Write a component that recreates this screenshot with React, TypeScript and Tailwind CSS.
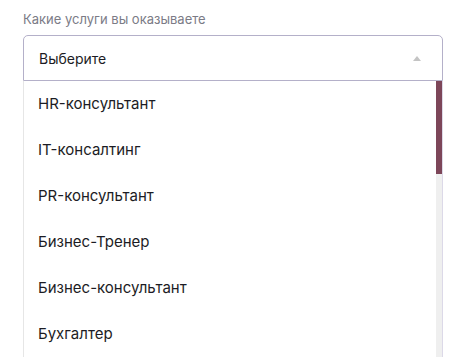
import React from "react";

const services = [
    "HR-консультант",
    "IT-консалтинг",
    "PR-консультант",
    "Бизнес-Тренер",
    "Бизнес-консультант",
    "Бухгалтер",
];

export default function App() {
    return (
        <div className="h-[357px] overflow-hidden bg-white pl-[23px] pt-[11px] font-['Inter','Noto_Sans',sans-serif]">
            <div className="w-[420px]">
                <div className="text-[13px] leading-[16px] text-[#7b7b86]">Какие услуги вы оказываете</div>
                <div className="mt-[8px] flex h-[46px] items-center justify-between rounded-t-[5px] border border-[#b4b0c9] pl-[15px] pr-[21px] text-[14px] text-[#1c1c24]">
                    <span>Выберите</span>
                    <svg width="8" height="5" viewBox="0 0 8 5">
                        <path d="M4 0 L8 5 L0 5 Z" fill="#c4c4c4" />
                    </svg>
                </div>
                <div className="flex border-l border-r border-l-[#e6e6e6] border-r-[#dcd9e8]">
                    <div className="flex-1">
                        {services.map((s) => (
                            <div key={s} className="flex h-[46px] items-center pl-[14px] text-[15px] text-[#1c1c24]">
                                {s}
                            </div>
                        ))}
                    </div>
                    <div className="w-[6px] bg-[#efefef]">
                        <div className="h-[93px] bg-[#7d4659]"></div>
                    </div>
                </div>
            </div>
        </div>
    );
}
